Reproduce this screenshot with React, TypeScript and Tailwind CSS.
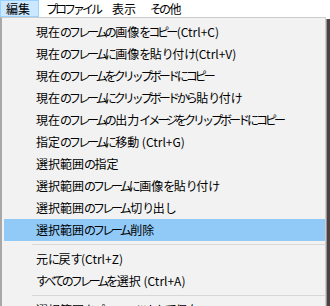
import React from "react";

type Item = { label: string } | { sep: true };

const items: Item[] = [
  { label: "現在のフレームの画像をコピー (Ctrl+C)" },
  { label: "現在のフレームに画像を貼り付け (Ctrl+V)" },
  { label: "現在のフレームをクリップボードにコピー" },
  { label: "現在のフレームにクリップボードから貼り付け" },
  { label: "現在のフレームの出力イメージをクリップボードにコピー" },
  { label: "指定のフレームに移動 (Ctrl+G)" },
  { label: "選択範囲の指定" },
  { label: "選択範囲のフレームに画像を貼り付け" },
  { label: "選択範囲のフレーム切り出し" },
  { label: "選択範囲のフレーム削除" },
  { sep: true },
  { label: "元に戻す(Ctrl+Z)" },
  { label: "すべてのフレームを選択 (Ctrl+A)" },
  { sep: true },
  { label: "選択範囲をプロファイルとして保存" },
];

const ACTIVE = 9;

// the UI font has proportional kana; tighten kana runs to match
function Jp({ text }: { text: string }) {
  const parts = text.split(/([\u3040-\u30ff]+)/).filter(Boolean);
  return (
    <>
      {parts.map((p, i) =>
        /[\u3040-\u30ff]/.test(p) ? (
          <span key={i} className="tracking-[-3px]">
            {p}
          </span>
        ) : (
          <span key={i} className={i > 0 ? "ml-[1.5px]" : ""}>
            {p}
          </span>
        )
      )}
    </>
  );
}

const App: React.FC = () => {
  return (
    <div className="w-[330px] h-[306px] overflow-hidden bg-white text-black text-[12px] leading-none font-['Noto_Sans_CJK_JP','Noto_Sans',sans-serif]">
      {/* menu bar */}
      <div className="flex h-[17px] items-stretch whitespace-nowrap">
        <div className="flex items-center px-[5px] bg-[#cce8ff] border border-[#99d1ff] w-[39px]">
          編集
        </div>
        <div className="flex items-center pl-[7px] w-[73px]">
          <Jp text="プロファイル" />
        </div>
        <div className="flex items-center w-[38px]">表示</div>
        <div className="flex items-center">
          <Jp text="その他" />
        </div>
      </div>

      <div className="flex">
        {/* dropdown */}
        <div className="w-[326px] h-[289px] bg-[#f2f2f2] border-t border-t-[#cccccc] border-l-2 border-l-[#a8a8a8] border-r border-r-[#cccccc] pl-[2px] pt-[3px]">
          {items.map((it, i) =>
            "sep" in it ? (
              <div key={i} className="h-[7px] flex items-center pl-[28px]">
                <div className="h-px w-full bg-[#d7d7d7]" />
              </div>
            ) : (
              <div
                key={i}
                className={`h-[22px] flex items-center pl-[32px] whitespace-nowrap ${
                  i === ACTIVE ? "bg-[#91c9f7]" : ""
                }`}
              >
                <Jp text={it.label} />
              </div>
            )
          )}
        </div>
        <div className="flex-1 h-[289px] flex">
          <div className="w-px bg-[#9a9494] mt-[2px]" />
          <div className="flex-1 bg-[#4a4242] mt-[2px]" />
        </div>
      </div>
    </div>
  );
};

export default App;
